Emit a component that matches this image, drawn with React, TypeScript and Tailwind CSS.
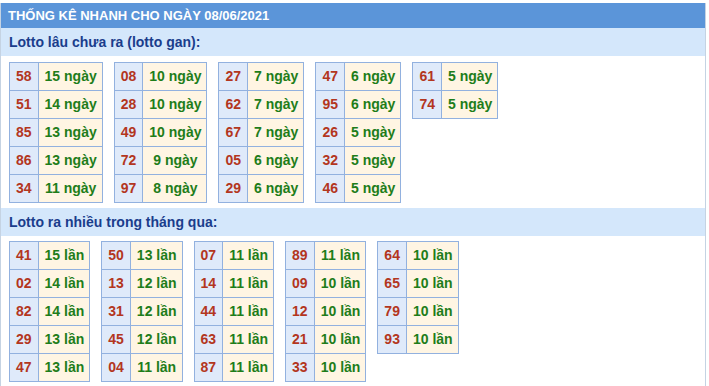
import React from 'react'

const ganData: [string, string][][] = [
  [["58", "15"], ["51", "14"], ["85", "13"], ["86", "13"], ["34", "11"]],
  [["08", "10"], ["28", "10"], ["49", "10"], ["72", "9"], ["97", "8"]],
  [["27", "7"], ["62", "7"], ["67", "7"], ["05", "6"], ["29", "6"]],
  [["47", "6"], ["95", "6"], ["26", "5"], ["32", "5"], ["46", "5"]],
  [["61", "5"], ["74", "5"]],
]

const nhieuData: [string, string][][] = [
  [["41", "15"], ["02", "14"], ["82", "14"], ["29", "13"], ["47", "13"]],
  [["50", "13"], ["13", "12"], ["31", "12"], ["45", "12"], ["04", "11"]],
  [["07", "11"], ["14", "11"], ["44", "11"], ["63", "11"], ["87", "11"]],
  [["89", "11"], ["09", "10"], ["12", "10"], ["21", "10"], ["33", "10"]],
  [["64", "10"], ["65", "10"], ["79", "10"], ["93", "10"]],
]

function StatTable({ rows, unit }: { rows: [string, string][]; unit: string }) {
  return (
    <div className="flex border-l border-t border-[#92b1df]">
      <div className="flex flex-col">
        {rows.map(([num]) => (
          <div key={num} className="h-[28px] px-[6px] flex items-center justify-center border-r border-b border-[#92b1df] bg-[#dfeafa] text-[#b3361e]">
            {num}
          </div>
        ))}
      </div>
      <div className="flex flex-col">
        {rows.map(([num, count]) => (
          <div key={num} className="h-[28px] pl-[6px] pr-[5px] flex items-center justify-center border-r border-b border-[#92b1df] bg-[#fff5e3] text-[#1e7d1a]">
            {count} {unit}
          </div>
        ))}
      </div>
    </div>
  )
}

function Section({ title, data, unit, top }: { title: string; data: [string, string][][]; unit: string; top: string }) {
  return (
    <>
      <div className="h-[28px] flex items-center pl-[8px] bg-[#d4e7fb] text-[#1a3d8c] text-[14px] font-bold">
        {title}
      </div>
      <div className={`flex items-start gap-[11px] px-[8px] ${top}`}>
        {data.map((rows, i) => (
          <StatTable key={i} rows={rows} unit={unit} />
        ))}
      </div>
    </>
  )
}

export default function App() {
  return (
    <div className="bg-white w-[709px] h-[386px] overflow-hidden pt-[3px]" style={{ fontFamily: '"Liberation Sans", Arial, sans-serif' }}>
      <div className="w-[706px] h-[400px] border-x border-[#c5d3e3] text-[14px] font-bold">
        <div className="h-[25px] flex items-center pl-[7px] bg-[#5b95d9] text-white text-[13px] font-bold">
          THỐNG KÊ NHANH CHO NGÀY 08/06/2021
        </div>
        <Section title="Lotto lâu chưa ra (lotto gan):" data={ganData} unit="ngày" top="pt-[6px] pb-[5px]" />
        <Section title="Lotto ra nhiều trong tháng qua:" data={nhieuData} unit="lần" top="pt-[5px]" />
      </div>
    </div>
  )
}
